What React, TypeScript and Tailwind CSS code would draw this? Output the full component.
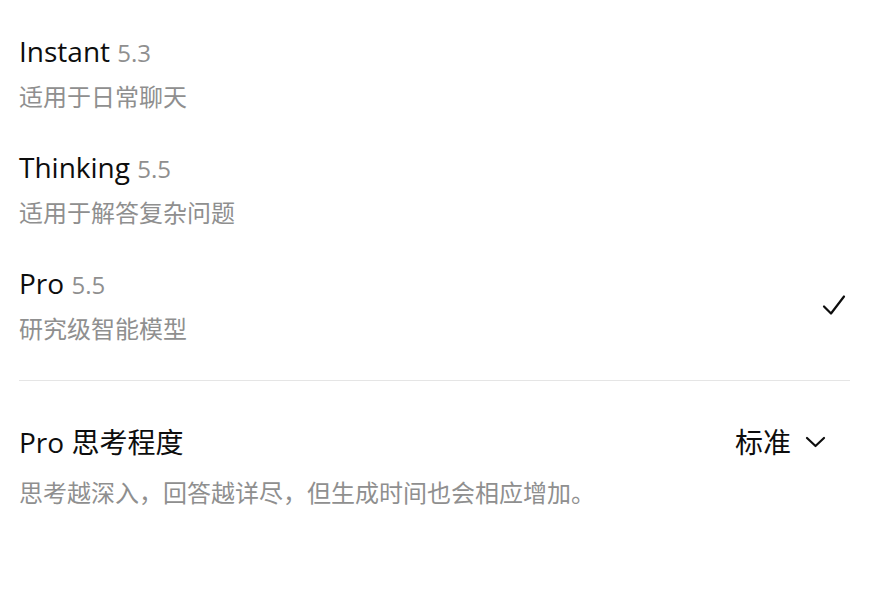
import React from "react";

const models = [
  { name: "Instant", ver: "5.3", desc: "适用于日常聊天", selected: false },
  { name: "Thinking", ver: "5.5", desc: "适用于解答复杂问题", selected: false },
  { name: "Pro", ver: "5.5", desc: "研究级智能模型", selected: true },
];

export default function App() {
  return (
    <div
      className="w-[882px] h-[602px] bg-white overflow-hidden"
      style={{ fontFamily: '"Open Sans", "Noto Sans CJK SC", sans-serif' }}
    >
      <div className="pl-[19px] pr-[32px] pt-[15px]">
        {models.map((m) => (
          <div key={m.name} className="flex items-center justify-between py-[18px]">
            <div className="flex flex-col gap-[12px]">
              <div className="h-[36px] leading-[36px] text-[28px] text-[#0d0d0d]">
                {m.name} <span className="text-[24px] text-[#8f8f8f]">{m.ver}</span>
              </div>
              <div className="h-[32px] leading-[32px] text-[24px] text-[#8f8f8f]">{m.desc}</div>
            </div>
            {m.selected && (
              <svg width="26" height="26" viewBox="0 0 26 26" fill="none" className="mr-[3px]">
                <path
                  d="M3 14.5 L10 21.5 L23 4.5"
                  stroke="#0d0d0d"
                  strokeWidth="2.2"
                  strokeLinecap="round"
                  strokeLinejoin="round"
                />
              </svg>
            )}
          </div>
        ))}
        <div className="h-px bg-[#e5e5e5] mt-[17px]" />
        <div className="flex items-center justify-between mt-[43px] h-[36px]">
          <div className="leading-[36px] text-[28px] text-[#0d0d0d]">Pro 思考程度</div>
          <div className="flex items-center gap-[14px] mr-[24px]">
            <span className="leading-[36px] text-[28px] text-[#0d0d0d]">标准</span>
            <svg width="21" height="12" viewBox="0 0 21 12" fill="none">
              <path
                d="M2 2 L10.5 10 L19 2"
                stroke="#0d0d0d"
                strokeWidth="2.2"
                strokeLinecap="round"
                strokeLinejoin="round"
              />
            </svg>
          </div>
        </div>
        <div className="mt-[17px] h-[32px] leading-[32px] text-[24px] text-[#8f8f8f]">
          思考越深入，回答越详尽，但生成时间也会相应增加。
        </div>
      </div>
    </div>
  );
}
